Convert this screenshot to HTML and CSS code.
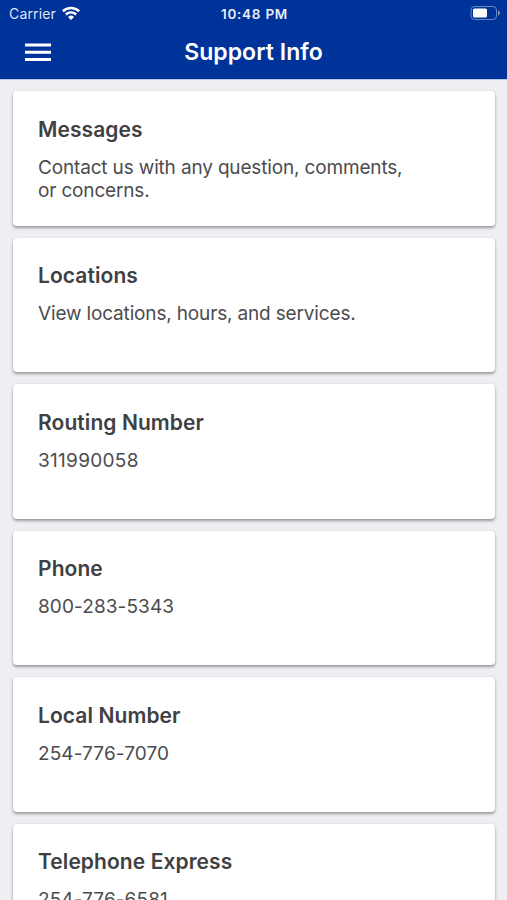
FILE: index.html
```html
<!DOCTYPE html>
<html lang="en">
<head>
<meta charset="utf-8">
<title>Support Info</title>
<link rel="stylesheet" href="styles.css">
</head>
<body>
<header class="header">
  <div class="status">
    <div class="carrier"><span class="carrier-name">Carrier</span>
      <svg class="wifi" width="18" height="14" viewBox="0 0 18 14"><path d="M0 4.300a13 13 0 0 1 18 0l-1.700 1.900a10.500 10.500 0 0 0-14.600 0zM3 7.600a8.600 8.600 0 0 1 12 0l-1.700 1.800a6 6 0 0 0-8.600 0zM6 10.900a4.400 4.400 0 0 1 6 0l-3 3z" fill="#fff"/></svg>
    </div>
    <span class="time">10:48 PM</span>
    <svg class="battery" width="30" height="14" viewBox="0 0 30 14"><rect x="1" y=".5" width="25.500" height="13" rx="3.500" fill="none" stroke="#6685c2"/><rect x="3" y="2.500" width="14" height="9" rx="1.500" fill="#fff"/><path d="M28 4.500c2.400.6 2.400 4.400 0 5z" fill="#8099cc"/></svg>
  </div>
  <div class="nav">
    <svg class="menu" width="26" height="20" viewBox="0 0 26 20"><path d="M0 3h26M0 10.200h26M0 17.400h26" stroke="#fff" stroke-width="3"/></svg>
    <h1 class="title">Support Info</h1>
  </div>
</header>
<main class="list">
  <section class="card"><h2>Messages</h2><p>Contact us with any question, comments,<br>or concerns.</p></section>
  <section class="card"><h2>Locations</h2><p>View locations, hours, and services.</p></section>
  <section class="card"><h2>Routing Number</h2><p class="number routing">311990058</p></section>
  <section class="card"><h2>Phone</h2><p class="number">800-283-5343</p></section>
  <section class="card"><h2>Local Number</h2><p class="number">254-776-7070</p></section>
  <section class="card"><h2>Telephone Express</h2><p class="number">254-776-6581</p></section>
</main>
</body>
</html>
```
FILE: styles.css
```css
* { box-sizing: border-box; margin: 0; }
html, body { height: 900px; overflow: hidden; }
body { font-family: Inter, sans-serif; background: #eeeef3; color: #404042; }
.header { height: 79px; background: #003399; color: #fff; box-shadow: 0 1px 0 #b9c6e2; }
.status { height: 27px; padding: 0 7px 0 9px; display: grid; grid-template-columns: 1fr auto 1fr; align-items: center; }
.carrier { display: flex; align-items: center; gap: 6px; }
.carrier-name { font-size: 14px; letter-spacing: .15px; color: #dfe6f5; }
.wifi { margin-top: -2px; }
.time { font-size: 13.500px; font-weight: 600; letter-spacing: .75px; color: #e8edf8; }
.battery { justify-self: end; margin-top: -1px; }
.nav { height: 50px; padding: 0 25px; display: grid; grid-template-columns: 26px 1fr 26px; align-items: center; }
.title { font-size: 23px; line-height: 28px; font-weight: 600; text-align: center; letter-spacing: .05px; }
.list { padding: 12px 12px 0 13px; display: grid; gap: 12px; }
.card { height: 134.600px; padding: 24.500px 25px 0; background: #fff; border-radius: 4px; box-shadow: 0 2px 3px rgba(0,0,0,.34), 0 0 2px rgba(0,0,0,.1); }
h2 { font-size: 21px; line-height: 28px; font-weight: 600; letter-spacing: .08px; }
p { margin-top: 12px; font-size: 19px; line-height: 23px; letter-spacing: -.16px; color: #4c4c4e; }
.number { letter-spacing: .1px; }
.routing { letter-spacing: .3px; }
```
